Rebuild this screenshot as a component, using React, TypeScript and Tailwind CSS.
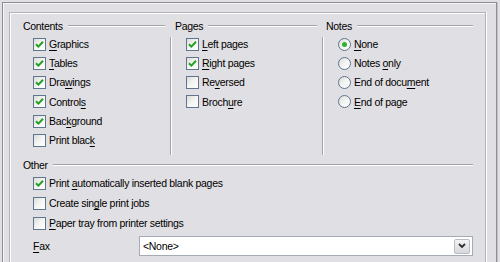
import React from "react";

const FONT = { fontFamily: '"Liberation Sans", Arial, sans-serif' };

function Mn({ text, at }: { text: string; at: number }) {
  return (
    <span className="whitespace-pre">
      {text.slice(0, at)}
      <span className="underline underline-offset-[2px] decoration-[1px]">{text[at]}</span>
      {text.slice(at + 1)}
    </span>
  );
}

function Check({ checked }: { checked?: boolean }) {
  return (
    <span className="relative flex h-[13px] w-[13px] shrink-0 items-center justify-center border border-[#5f7590] bg-gradient-to-br from-[#dcdcd8] via-[#f4f4f2] to-white">
      {checked && (
        <svg width="9" height="9" viewBox="0 0 9 9">
          <path d="M1 4.2 L3.4 6.6 L8 1.8" fill="none" stroke="#21a121" strokeWidth="2" />
        </svg>
      )}
    </span>
  );
}

function Radio({ checked }: { checked?: boolean }) {
  return (
    <span className="flex h-[13px] w-[13px] shrink-0 items-center justify-center rounded-full border border-[#5f7590] bg-gradient-to-br from-[#dcdcd8] via-[#f4f4f2] to-white">
      {checked && <span className="h-[5px] w-[5px] rounded-full bg-[#2fb12f]" />}
    </span>
  );
}

function Row({ children, control }: { children: React.ReactNode; control: React.ReactNode }) {
  return (
    <div className="flex h-[14px] items-center gap-[3px]">
      {control}
      <span className="text-[10.5px] leading-none tracking-[-0.3px] text-black">{children}</span>
    </div>
  );
}

function Header({ title, pl, mr }: { title: string; pl: string; mr: string }) {
  return (
    <div className={`flex h-[14px] items-center ${pl}`}>
      <span className="text-[10.5px] leading-none tracking-[-0.3px] text-black">{title}</span>
      <div className={`ml-[5px] h-[2px] flex-1 border-t border-[#a3a2a8] border-b border-b-white ${mr}`} />
    </div>
  );
}

export default function App() {
  return (
    <div className="h-[262px] w-[500px] overflow-hidden bg-[#e0dfe3] pl-[2px] pt-[2px] pr-[3px]" style={FONT}>
      <div className="h-[270px] border-l border-t border-r border-[#8e8d92] pl-[6px] pt-[9px] pr-[10px] shadow-[inset_1px_1px_0_#f6f6f8,1px_0_0_#c4c3c8]">
        <div className="h-[260px] border-l border-t border-r border-[#b3b2b7] shadow-[inset_1px_1px_0_#ffffff,1px_0_0_#ffffff]">
          {/* top section */}
          <div className="flex pt-[6px]">
            <div className="w-[160px]">
              <Header title="Contents" pl="pl-[13px]" mr="mr-[5px]" />
              <div className="mt-[4px] flex flex-col gap-[5.3px] pl-[23px] pb-[8px]">
                <Row control={<Check checked />}><Mn text="Graphics" at={0} /></Row>
                <Row control={<Check checked />}><Mn text="Tables" at={0} /></Row>
                <Row control={<Check checked />}><Mn text="Drawings" at={3} /></Row>
                <Row control={<Check checked />}><Mn text="Controls" at={7} /></Row>
                <Row control={<Check checked />}><Mn text="Background" at={3} /></Row>
                <Row control={<Check />}><Mn text="Print black" at={10} /></Row>
              </div>
            </div>
            <div className="w-[152px]">
              <Header title="Pages" pl="pl-[5px]" mr="mr-[5px]" />
              <div className="mt-[4px] flex h-[118px] flex-col gap-[5.3px] border-l border-[#a3a2a8] pl-[15px] shadow-[inset_1px_0_0_#ffffff]">
                <Row control={<Check checked />}><Mn text="Left pages" at={0} /></Row>
                <Row control={<Check checked />}><Mn text="Right pages" at={0} /></Row>
                <Row control={<Check />}><Mn text="Reversed" at={2} /></Row>
                <Row control={<Check />}><Mn text="Brochure" at={5} /></Row>
              </div>
            </div>
            <div className="flex-1">
              <Header title="Notes" pl="pl-[4px]" mr="mr-[12px]" />
              <div className="mt-[4px] flex h-[118px] flex-col gap-[5.3px] border-l border-[#a3a2a8] pl-[15px] shadow-[inset_1px_0_0_#ffffff]">
                <Row control={<Radio checked />}><Mn text="None" at={0} /></Row>
                <Row control={<Radio />}><Mn text="Notes only" at={6} /></Row>
                <Row control={<Radio />}><Mn text="End of document" at={11} /></Row>
                <Row control={<Radio />}><Mn text="End of page" at={0} /></Row>
              </div>
            </div>
          </div>

          {/* other section */}
          <div className="pt-[3px]">
            <Header title="Other" pl="pl-[13px]" mr="mr-[12px]" />
            <div className="mt-[4px] flex flex-col gap-[6px] pl-[23px]">
              <Row control={<Check checked />}><Mn text="Print automatically inserted blank pages" at={6} /></Row>
              <Row control={<Check />}><Mn text="Create single print jobs" at={10} /></Row>
              <Row control={<Check />}><Mn text="Paper tray from printer settings" at={0} /></Row>
            </div>
            <div className="mt-[6px] flex items-center pl-[23px] pr-[12px]">
              <span className="w-[106px] text-[10.5px] leading-none tracking-[-0.3px] text-black">
                <Mn text="Fax" at={0} />
              </span>
              <div className="flex h-[20px] flex-1 items-center border border-[#a5acb5] bg-white pl-[3px] pr-[2px]">
                <span className="flex-1 text-[10.5px] leading-none tracking-[-0.3px] text-black">&lt;None&gt;</span>
                <span className="flex h-[15px] w-[16px] items-center justify-center rounded-[2px] border border-[#b8bcc4] bg-gradient-to-b from-[#f4f4f6] to-[#d6d6dc]">
                  <svg width="8" height="6" viewBox="0 0 8 6">
                    <path d="M1 1 L4 4 L7 1" fill="none" stroke="#2d2d30" strokeWidth="1.8" />
                  </svg>
                </span>
              </div>
            </div>
          </div>
        </div>
      </div>
    </div>
  );
}
